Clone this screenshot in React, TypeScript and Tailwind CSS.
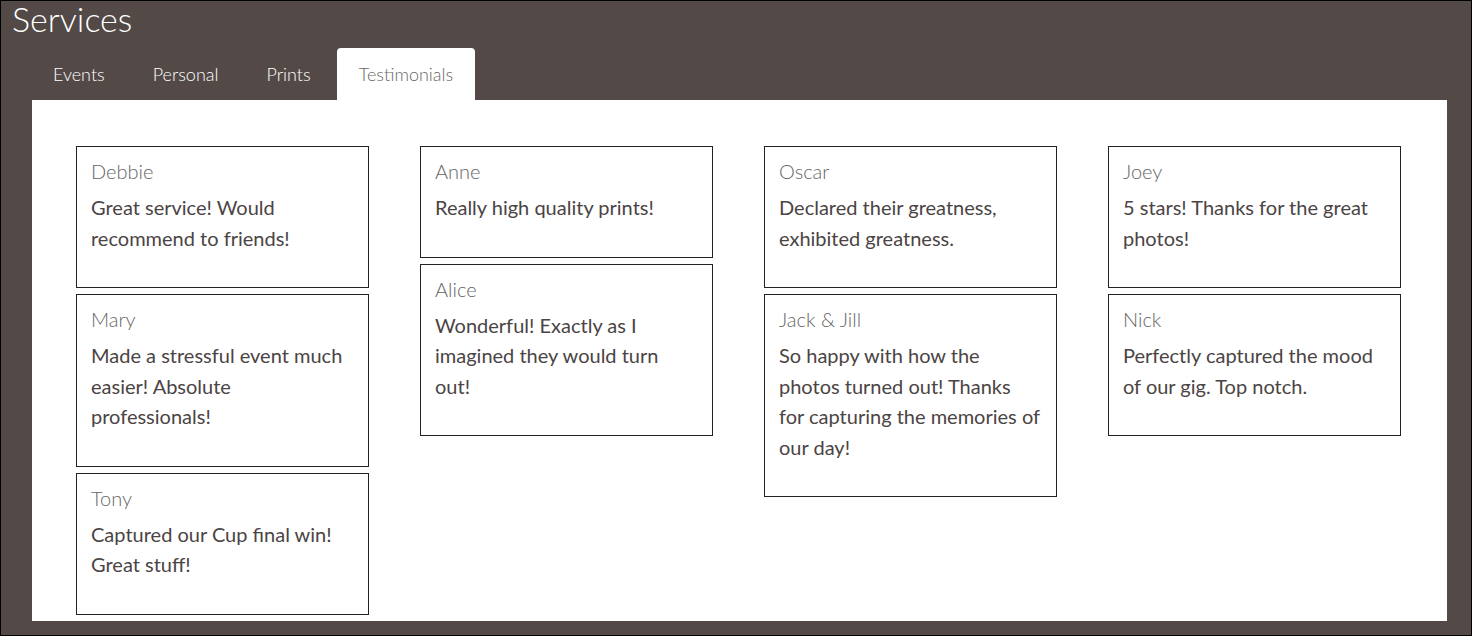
import React from "react";

type T = { name: string; text: string };

const columns: T[][] = [
  [
    { name: "Debbie", text: "Great service! Would recommend to friends!" },
    { name: "Mary", text: "Made a stressful event much easier! Absolute professionals!" },
    { name: "Tony", text: "Captured our Cup final win! Great stuff!" },
  ],
  [
    { name: "Anne", text: "Really high quality prints!" },
    { name: "Alice", text: "Wonderful! Exactly as I imagined they would turn out!" },
  ],
  [
    { name: "Oscar", text: "Declared their greatness, exhibited greatness." },
    { name: "Jack & Jill", text: "So happy with how the photos turned out! Thanks for capturing the memories of our day!" },
  ],
  [
    { name: "Joey", text: "5 stars! Thanks for the great photos!" },
    { name: "Nick", text: "Perfectly captured the mood of our gig. Top notch." },
  ],
];

function Card({ t }: { t: T }) {
  return (
    <div className="border border-[#222] bg-white pl-[14px] pr-[16px] pt-[10px] pb-[34px]">
      <div className="text-[20px] leading-[28px] font-light text-[#666] mb-[7px] font-['Lato',sans-serif]">
        {t.name}
      </div>
      <p className="text-[20px] leading-[30.5px] text-[#4b4444] font-['Lato',sans-serif]">{t.text}</p>
    </div>
  );
}

export default function App() {
  const tabs = ["Events", "Personal", "Prints", "Testimonials"];
  return (
    <div className="w-[1472px] h-[636px] bg-[#534a48] border border-black flex flex-col font-['Lato',sans-serif]">
      <h1 className="text-[34px] leading-[36px] font-light text-white pl-[11px] h-[47px] font-['Lato',sans-serif]">
        Services
      </h1>
      <div className="flex pl-[30px] gap-[4px] h-[52px]">
        {tabs.map((tab) => (
          <div
            key={tab}
            className={
              tab === "Testimonials"
                ? "px-[22px] bg-white rounded-t-[4px] text-[#666] text-[18px] font-light flex items-center"
                : "px-[22px] text-white text-[18px] font-light flex items-center"
            }
          >
            {tab}
          </div>
        ))}
      </div>
      <div className="ml-[31px] mr-[24px] bg-white h-[521px] pt-[46px] pl-[44px]">
        <div className="flex gap-[51px] items-start">
          {columns.map((col, i) => (
            <div key={i} className="w-[293px] flex flex-col gap-[6px]">
              {col.map((t) => (
                <Card key={t.name} t={t} />
              ))}
            </div>
          ))}
        </div>
      </div>
    </div>
  );
}
